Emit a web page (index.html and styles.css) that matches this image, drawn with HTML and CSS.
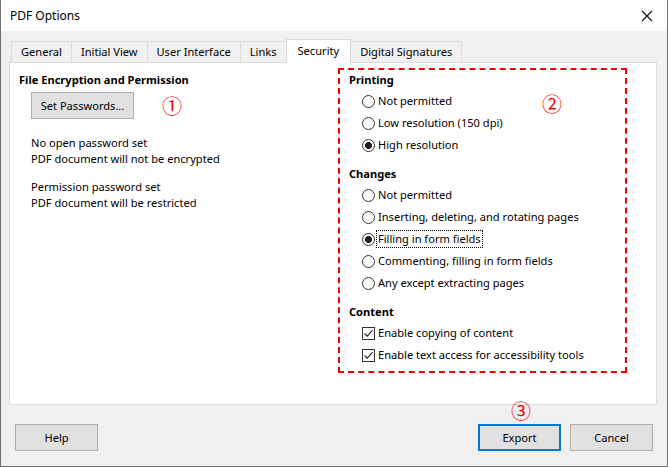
FILE: index.html
```html
<!DOCTYPE html>
<html>
<head>
<meta charset="utf-8">
<link rel="stylesheet" href="styles.css">
</head>
<body>
<div class="window">
  <div class="titlebar">
    <span class="title">PDF Options</span>
    <svg class="close" width="12" height="12" viewBox="0 0 12 12"><path d="M1 1L11 11M11 1L1 11" stroke="#111" stroke-width="1.1"/></svg>
  </div>
  <div class="main">
    <div class="tabs">
      <div class="tab">General</div>
      <div class="tab">Initial View</div>
      <div class="tab">User Interface</div>
      <div class="tab">Links</div>
      <div class="tab active">Security</div>
      <div class="tab">Digital Signatures</div>
    </div>
    <div class="panel">
      <div class="left">
        <div class="heading">File Encryption and Permission</div>
        <div class="pw-row">
          <button class="btn pw-btn">Set Passwords...</button>
          <span class="mark mark1">①</span>
        </div>
        <div class="info">
          <div>No open password set</div>
          <div>PDF document will not be encrypted</div>
        </div>
        <div class="info info2">
          <div>Permission password set</div>
          <div>PDF document will be restricted</div>
        </div>
      </div>
      <div class="box">
        <div class="heading">Printing</div>
        <div class="option"><span class="radio"></span><span class="label">Not permitted</span></div>
        <div class="option"><span class="radio"></span><span class="label">Low resolution (150 dpi)</span></div>
        <div class="option"><span class="radio on"></span><span class="label">High resolution</span></div>
        <div class="heading group">Changes</div>
        <div class="option"><span class="radio"></span><span class="label">Not permitted</span></div>
        <div class="option"><span class="radio"></span><span class="label">Inserting, deleting, and rotating pages</span></div>
        <div class="option"><span class="radio on"></span><span class="label focus">Filling in form fields</span></div>
        <div class="option"><span class="radio"></span><span class="label">Commenting, filling in form fields</span></div>
        <div class="option"><span class="radio"></span><span class="label">Any except extracting pages</span></div>
        <div class="heading group">Content</div>
        <div class="option"><span class="check"><svg width="11" height="11" viewBox="0 0 11 11"><path d="M1.5 5.5L4.2 8.2L9.6 2.2" fill="none" stroke="#222" stroke-width="1.1"/></svg></span><span class="label">Enable copying of content</span></div>
        <div class="option"><span class="check"><svg width="11" height="11" viewBox="0 0 11 11"><path d="M1.5 5.5L4.2 8.2L9.6 2.2" fill="none" stroke="#222" stroke-width="1.1"/></svg></span><span class="label">Enable text access for accessibility tools</span></div>
      </div>
    </div>
  </div>
  <div class="footer">
    <button class="btn">Help</button>
    <div class="spacer"></div>
    <button class="btn primary">Export</button>
    <button class="btn">Cancel</button>
  </div>
  <span class="mark mark2">②</span>
  <span class="mark mark3">③</span>
</div>
</body>
</html>
```
FILE: styles.css
```css
html, body {
  margin: 0;
  padding: 0;
  background: #f0f0f0;
}
.window {
  position: relative;
  width: 668px;
  height: 467px;
  box-sizing: border-box;
  border-left: 1px solid #6f6f6f;
  border-right: 1px solid #6f6f6f;
  border-bottom: 1px solid #6f6f6f;
  background: #f0f0f0;
  display: flex;
  flex-direction: column;
  font-family: "Noto Sans", "Open Sans", sans-serif;
  font-size: 11.1px;
  color: #000;
}
.titlebar {
  height: 31px;
  flex: none;
  background: #fff;
  display: flex;
  align-items: center;
  padding: 0 10px 0 9px;
}
.title {
  font-size: 12px;
  flex: 1;
}
.close {
  margin-right: 4px;
}
.main {
  padding: 8px 10px 0 8px;
}
.tabs {
  display: flex;
  align-items: flex-end;
  height: 23px;
  padding-left: 2px;
}
.tab {
  height: 21px;
  box-sizing: border-box;
  border: 1px solid #d9d9d9;
  border-bottom: none;
  margin-right: -1px;
  padding: 0 9px;
  line-height: 20px;
  background: #f0f0f0;
  white-space: nowrap;
}
.tab.active {
  height: 24px;
  line-height: 21px;
  background: #fff;
  margin-bottom: -1px;
  position: relative;
  z-index: 1;
  padding: 0 11px;
}
.panel {
  height: 343px;
  box-sizing: border-box;
  background: #fff;
  border: 1px solid #d9d9d9;
  display: flex;
  padding: 5px 29px 0 9px;
}
.left {
  flex: 1;
  padding-top: 3px;
}
.heading {
  font-weight: 700;
  line-height: 18px;
  margin-bottom: 2px;
}
.box .heading {
  margin-top: 1px;
  margin-bottom: 1px;
}
.box .heading.group {
  margin-top: 9px;
}
.pw-row {
  display: flex;
  align-items: center;
  margin: 3px 0 0 12px;
}
.btn {
  font-family: inherit;
  font-size: 11.1px;
  color: #000;
  background: #e1e1e1;
  border: 1px solid #adadad;
  height: 27px;
  box-sizing: border-box;
  padding: 0;
  margin: 0;
}
.pw-btn {
  width: 103px;
}
.mark {
  font-family: "Noto Sans CJK JP", "DejaVu Sans", sans-serif;
  color: #f20000;
  font-size: 20px;
  line-height: 20px;
}
.mark1 {
  margin-left: 28px;
}
.mark2 {
  position: absolute;
  left: 541px;
  top: 94px;
}
.mark3 {
  position: absolute;
  left: 510px;
  top: 401px;
}
.info {
  margin: 16px 0 0 12px;
  line-height: 16px;
}
.info2 {
  margin-top: 12px;
}
.box {
  width: 289px;
  height: 305px;
  box-sizing: border-box;
  border: 2px dashed #f20000;
  padding: 0 0 0 9px;
}
.option {
  height: 22px;
  display: flex;
  align-items: center;
  margin-left: 13px;
}
.radio {
  width: 13px;
  height: 13px;
  box-sizing: border-box;
  border: 1px solid #333;
  border-radius: 50%;
  background: #fff;
  margin-right: 1px;
  flex: none;
}
.radio.on {
  background: radial-gradient(circle, #222 3.2px, #fff 3.8px);
}
.check {
  width: 13px;
  height: 13px;
  box-sizing: border-box;
  border: 1px solid #333;
  background: #fff;
  margin-right: 1px;
  flex: none;
  display: flex;
}
.label {
  line-height: 16px;
  padding: 0 1px;
  border: 1px solid transparent;
}
.label.focus {
  border: 1px dotted #000;
}
.footer {
  display: flex;
  gap: 9px;
  padding: 19px 14px 0 14px;
}
.footer .btn {
  width: 83px;
}
.spacer {
  flex: 1;
}
.btn.primary {
  border: 2px solid #0078d7;
}
```
